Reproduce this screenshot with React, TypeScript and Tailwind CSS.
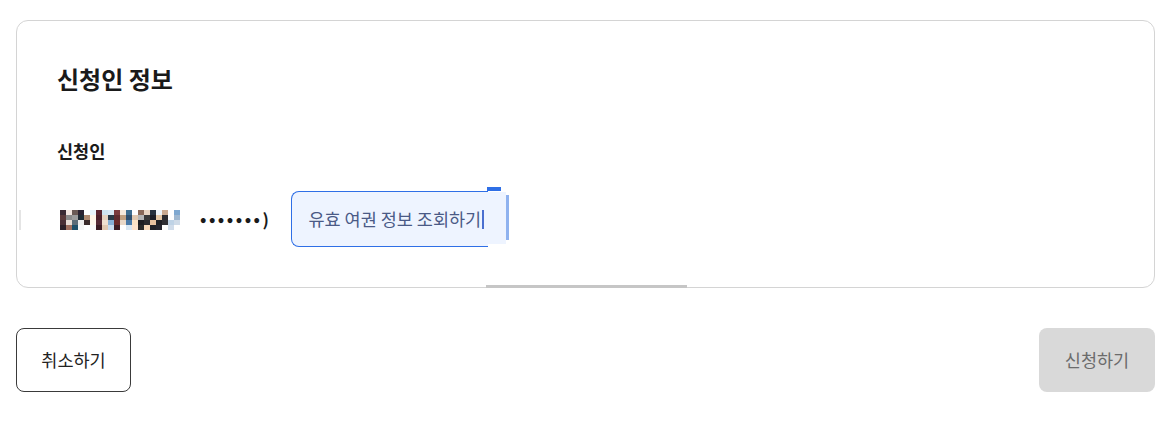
const MOSAIC = [
  ['#3a2a33', '#f2e6e0', '#6b5a55', '#2b2230', '#ffffff', '#e8f4fb', '#5a2530', '#cfe3f0', '#d9e7f5', '#7a3a3f', '#f5e9dc', '#3e6d8f', '#ffffff', '#8a6a5a', '#e9d5c3', '#27303d', '#eef3f8', '#c9a990', '#ffffff', '#7fa8d0', '#ffffff'],
  ['#5a3a3a', '#8b8b8b', '#9c9c9c', '#1f2a33', '#b08a70', '#fff5e8', '#4a1f2a', '#e6d1c0', '#2a3a4a', '#5f2a30', '#c0a080', '#2d4f6f', '#e0c8b0', '#b6b6b6', '#3a3a3a', '#1c1c24', '#e5c7a5', '#2c2c30', '#ffffff', '#a0b8d0', '#ffffff'],
  ['#4a3036', '#e7ddd6', '#5c6c78', '#eeeeee', '#3a2a2a', '#fff8ee', '#562a36', '#f0e0d0', '#87b0d6', '#6a2a2a', '#e8d8c8', '#4a7aa8', '#fbe3c6', '#1e1e22', '#2a2a2e', '#e6c0a0', '#1f1f26', '#2f2f35', '#bfd3e6', '#cfdbe8', '#ffffff'],
  ['#2c2028', '#a07060', '#1d4f6a', '#f6f6f6', '#ffffff', '#fbfbfb', '#3a1a22', '#e2c9b2', '#c9dcef', '#3c1c22', '#ffffff', '#d8e6f2', '#ffe4cc', '#2a2a2a', '#f6d7b8', '#202028', '#252530', '#ffffff', '#d0dcea', '#ffffff', '#ffffff'],
];

function MaskedName() {
  return (
    <svg width="126" height="20" viewBox="0 0 126 20" aria-hidden="true">
      {MOSAIC.map((row, y) =>
        row.map((c, x) => <rect key={`${x}-${y}`} x={x * 6} y={y * 5} width="6" height="5" fill={c} />)
      )}
    </svg>
  );
}

export default function App() {
  return (
    <div className="min-h-screen bg-white pt-5 pr-[18px] pl-4" style={{ fontFamily: '"Noto Sans CJK KR", "Noto Sans", sans-serif' }}>
      <div className="relative rounded-xl border border-[#d4d4d4] px-10 pt-[42px] pb-10">
        <h2 className="text-[24px] leading-[32px] font-bold text-[#1a1a1a]">신청인 정보</h2>

        <p className="mt-[44px] text-[17.5px] leading-6 font-bold text-[#1a1a1a]">신청인</p>

        <div className="mt-[28px] flex items-center">
          <span className="mt-[2px] ml-[3px]">
            <MaskedName />
          </span>
          <span className="ml-[14px] text-[17px] leading-6 font-bold tracking-[2.5px] text-[#1a1a1a]">•••••••)</span>

          <div className="relative ml-[20px] flex h-[56px]">
            <button className="flex h-[56px] w-[197px] items-center overflow-hidden rounded-l-lg border border-r-0 border-[#2f6fe6] bg-[#eef4ff] pl-4 text-[17.5px] whitespace-nowrap text-[#4a5a86]">
              유효 여권 정보 조회하기
              <span className="ml-[1px] h-[19px] w-[2px] bg-[#4a6fd0]" />
            </button>
            <div className="mt-[1px] h-[52px] w-[18px] bg-[#eef4ff]" />
            <div className="mt-1 h-[45px] w-[3px] bg-[#8fb2ef]" />
            <div className="absolute top-[-4px] left-[196px] h-[4px] w-[14px] bg-[#2f6fe6]" />
          </div>
        </div>

        <div className="absolute bottom-[-1px] left-[469px] h-[3px] w-[201px] bg-[#c6c6c6]" />
        <div className="absolute top-[189px] left-[2px] h-[20px] w-[2px] bg-[#e4e4e4]" />
      </div>

      <div className="mt-10 flex items-center justify-between">
        <button className="h-[64px] w-[115px] rounded-lg border border-[#3a3a3a] bg-white text-[17.5px] text-[#222]">취소하기</button>
        <button className="h-[64px] w-[116px] rounded-lg bg-[#d9d9d9] text-[17.5px] text-[#6b6b6b]">신청하기</button>
      </div>
    </div>
  );
}
